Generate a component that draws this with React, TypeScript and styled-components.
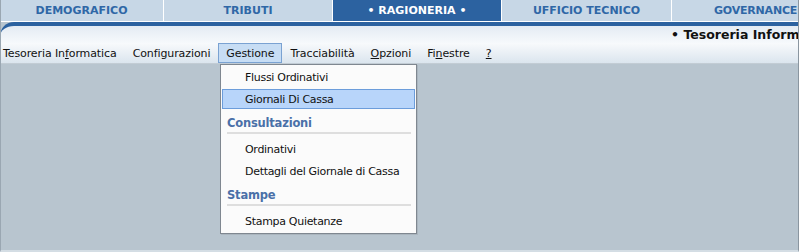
import React from "react";
import styled, { createGlobalStyle } from "styled-components";

const Global = createGlobalStyle`
  html, body { margin: 0; padding: 0; background: #b8c5cf; }
  body { font-family: Tahoma, "DejaVu Sans", sans-serif; }
`;

const Frame = styled.div`
  width: 799px;
  height: 252px;
  display: flex;
  flex-direction: column;
  background: #b8c5cf;
  overflow: hidden;
  position: relative;
  box-sizing: border-box;
  border-left: 1px solid #9aa7b2;
  border-right: 1px solid #8a96a0;
  border-bottom: 2px solid #d4dde4;
`;

const Tabs = styled.div`
  display: grid;
  grid-template-columns: 163px 168px 168px 169px 1fr;
  column-gap: 1px;
  height: 21px;
  background: #ffffff;
  padding-bottom: 1px;
  margin-left: -1px;
`;

const Tab = styled.div<{ $active?: boolean }>`
  display: flex;
  align-items: center;
  justify-content: center;
  background: ${(p) => (p.$active ? "#2c62a0" : "#c7d7e6")};
  color: ${(p) => (p.$active ? "#ffffff" : "#2f67a6")};
  font-family: "DejaVu Sans", sans-serif;
  font-weight: bold;
  font-size: 11px;
  white-space: nowrap;
  overflow: hidden;
`;

const LastTab = styled(Tab)`
  justify-content: flex-start;
  padding-left: 42px;
  letter-spacing: -0.2px;
`;

const Header = styled.div`
  height: 17px;
  border-top: 4px solid #2c62a0;
  border-top-left-radius: 14px;
  margin-left: -1px;
  background: linear-gradient(#e4ebf3, #f6f9fc);
  display: flex;
  justify-content: flex-end;
  align-items: center;
  overflow: hidden;
`;

const Title = styled.div`
  font-family: "DejaVu Sans", sans-serif;
  font-weight: bold;
  font-size: 12.5px;
  color: #111;
  white-space: nowrap;
  margin-right: -36px;
`;

const MenuBar = styled.div`
  height: 20px;
  display: flex;
  align-items: stretch;
  background: linear-gradient(#f8fafc, #dbe5ee);
  border-bottom: 1px solid #c2ccd4;
`;

const MenuItem = styled.div<{ $open?: boolean }>`
  display: flex;
  align-items: center;
  padding: 0 7px;
  font-family: "DejaVu Sans", sans-serif;
  font-size: 11px;
  letter-spacing: -0.1px;
  color: #111;
  white-space: nowrap;
  box-sizing: border-box;
  border: 1px solid ${(p) => (p.$open ? "#7aa2d2" : "transparent")};
  background: ${(p) => (p.$open ? "#c7ddf4" : "transparent")};
`;

const FirstItem = styled(MenuItem)`
  padding-left: 1px;
`;

const U = styled.span`
  text-decoration: underline;
`;

const Dropdown = styled.div`
  position: absolute;
  left: 219px;
  top: 64px;
  width: 197px;
  box-sizing: border-box;
  background: #fbfbfb;
  border: 1px solid #7f8790;
  display: flex;
  flex-direction: column;
  padding: 2px 1px 0 1px;
  box-shadow: 1px 1px 0 #aab5be;
`;

const DropItem = styled.div<{ $hi?: boolean }>`
  height: 20px;
  box-sizing: border-box;
  display: flex;
  align-items: center;
  padding-left: 22px;
  margin-bottom: 2px;
  font-family: "DejaVu Sans", sans-serif;
  font-size: 11px;
  letter-spacing: -0.3px;
  color: #111;
  border: 1px solid ${(p) => (p.$hi ? "#6c9ddb" : "transparent")};
  background: ${(p) => (p.$hi ? "#b8d5fa" : "transparent")};
  white-space: nowrap;
`;

const Section = styled.div`
  margin: 5px 4px 5px 5px;
  padding-bottom: 2px;
  line-height: 14px;
  border-bottom: 2px solid #dedede;
  font-family: "DejaVu Sans", sans-serif;
  font-weight: bold;
  font-size: 11.5px;
  color: #4a70a8;
  letter-spacing: -0.2px;
`;

export default function App() {
  return (
    <>
      <Global />
      <Frame>
        <Tabs>
          <Tab>DEMOGRAFICO</Tab>
          <Tab>TRIBUTI</Tab>
          <Tab $active>• RAGIONERIA •</Tab>
          <Tab>UFFICIO TECNICO</Tab>
          <LastTab>GOVERNANCE</LastTab>
        </Tabs>
        <Header>
          <Title>• Tesoreria Informatica</Title>
        </Header>
        <MenuBar>
          <FirstItem>
            Tesoreria In<U>f</U>ormatica
          </FirstItem>
          <MenuItem>Configurazioni</MenuItem>
          <MenuItem $open>Gestione</MenuItem>
          <MenuItem>Tracciabilità</MenuItem>
          <MenuItem>
            <U>O</U>pzioni
          </MenuItem>
          <MenuItem>
            Fi<U>n</U>estre
          </MenuItem>
          <MenuItem>
            <U>?</U>
          </MenuItem>
        </MenuBar>
        <Dropdown>
          <DropItem>Flussi Ordinativi</DropItem>
          <DropItem $hi>Giornali Di Cassa</DropItem>
          <Section>Consultazioni</Section>
          <DropItem>Ordinativi</DropItem>
          <DropItem>Dettagli del Giornale di Cassa</DropItem>
          <Section>Stampe</Section>
          <DropItem>Stampa Quietanze</DropItem>
        </Dropdown>
      </Frame>
    </>
  );
}
